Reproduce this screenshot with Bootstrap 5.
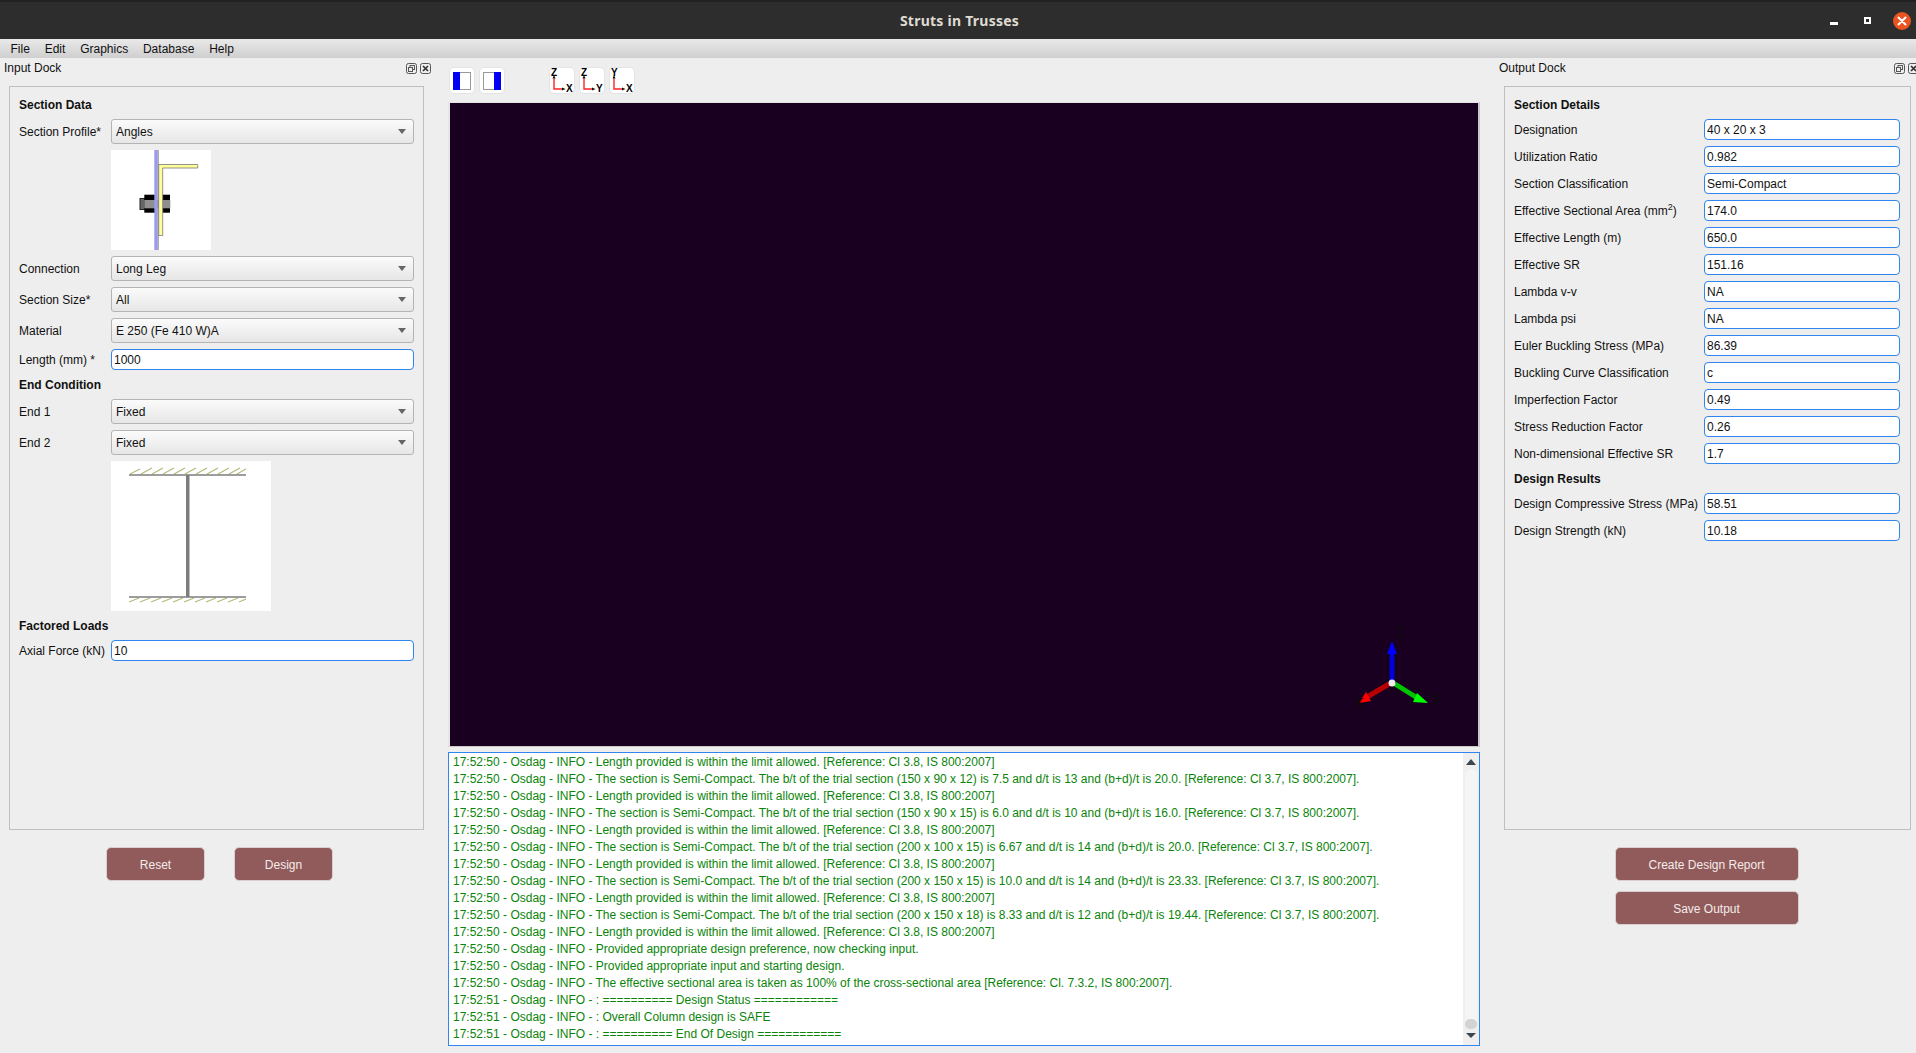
<!DOCTYPE html>
<html lang="en">
<head>
    <meta charset="UTF-8">
    <meta name="viewport" content="width=device-width, initial-scale=1.0">
    <title>Struts in Trusses</title>
    <link href="https://cdn.jsdelivr.net/npm/bootstrap@5.3.3/dist/css/bootstrap.min.css" rel="stylesheet">
    <style>
        html, body { height: 100%; }
        body { background: #eeeeee; color: #111; font: 12px/17px "Liberation Sans", Arial, sans-serif; overflow: hidden; }

        /* barra de titulo */
        .win-title { height: 39px; background: #2d2d2d; border-top: 2px solid #222; padding-left: 3px; color: #dfdbd2; font: bold 14px/38px "Noto Sans", sans-serif; letter-spacing: .25px; }
        .win-btns { right: 0; top: 0; height: 37px; }
        .win-min { margin: 6px 26px 0 0; }
        .win-close { width: 18px; height: 18px; margin: 0 5px 0 22px; }

        /* menu */
        .menu-bar { height: 19px; background: linear-gradient(#e9e9e9, #cfcfcf); padding-left: 10.5px; gap: 14.8px; line-height: 21px; }

        /* docks */
        .dock-left { width: 448px; }
        .dock-right { width: 436px; }
        .dock-head { height: 28px; line-height: 20px; }
        .dock-left .dock-head { padding: 0 17px 0 4px; }
        .dock-right .dock-head { padding: 0 0 0 19px; width: 439px; }
        .dock-ico { gap: 3px; height: 20px; }
        .dock-panel { border: 1px solid #bfbfbf; height: 744px; padding: 10px 9px 0; }
        .dock-left .dock-panel { margin-left: 9px; width: 415px; }
        .dock-right .dock-panel { margin-left: 24px; width: 407px; }
        .sec-title { font-weight: 700; margin: 0 0 5px; line-height: 17px; }
        .sec-title.next { margin-top: 7px; }
        .field-stack { gap: 6px; }
        .field-label { width: 92px; flex: none; white-space: nowrap; padding-top: 2px; }
        .field-label sup { top: -.6em; }
        .dock-right .field-label { width: 190px; }
        .dock-right .form-control { width: 196px; flex: none; }

        .form-select.qt-combo { height: 25px; padding: 2px 0 0 4px; font-size: 12px; line-height: 21px; color: #111; border: 1px solid #b4b4b4; border-radius: 3px;
            background-color: #f4f4f4; background-image: url("data:image/svg+xml,%3csvg xmlns='http://www.w3.org/2000/svg' width='8' height='5'%3e%3cpath fill='%23666' d='M0 0h8L4 5z'/%3e%3c/svg%3e"), linear-gradient(#fbfbfb, #e6e6e6);
            background-repeat: no-repeat; background-position: right 7px center, 0 0; background-size: 8px 5px, auto; box-shadow: none; }
        .form-control.qt-line { height: 21px; min-height: 0; padding: 1px 2px 0; font-size: 12px; line-height: 18px; color: #111; border: 1px solid #3085ee; border-radius: 4px; box-shadow: none; }

        .pic-box { background: #fff; display: block; margin-left: 92px; }

        /* botones */
        .btn.act-btn { background: #925b5b; color: #f3ecec; border: 1px solid #d9cfcf; border-radius: 5px; font-size: 12px; line-height: 17px; height: 34px; padding: 2px 0 0; }
        .left-btns { margin-top: 17px; gap: 29px; width: 439px; }
        .left-btns .act-btn { width: 99px; }
        .right-btns { margin: 17px 0 0 24px; width: 405px; gap: 10px; }
        .right-btns .act-btn { width: 184px; }

        /* centro */
        .center-col { width: 1032px; }
        .tool-strip { height: 44px; padding: 9px 0 0 1px; gap: 4px; }
        .tool-btn { width: 26px; height: 27px; background: #fff; border: 1px solid #e4e4e4; border-radius: 5px; }
        .tool-space { width: 36px; }
        .viewer { height: 645px; background: #190020; border: solid #e6e6e6; border-width: 1px 2px; border-right-color: #c9c9c9; border-bottom-color: #c9c9c9; }
        .axis-gizmo { left: 890px; top: 518px; }
        .log-box { margin-top: 5px; height: 294px; background: #fff; border: 1px solid #3085ee; }
        .log-text { padding: 1px 0 0 4px; color: #0a840a; white-space: nowrap; overflow: hidden; }
        .log-scroll { width: 16px; background: #efefef; padding-top: 6px; }
        .scroll-track { width: 12px; height: 260px; margin: 4px auto 0; background: #f5f5f5; border-radius: 6px; padding-top: 250px; }
        .scroll-thumb { height: 10px; background: #d3d3d3; border-radius: 5px; }
        .tri-up, .tri-down { width: 0; height: 0; margin: 0 auto; border-left: 5px solid transparent; border-right: 5px solid transparent; }
        .tri-up { border-bottom: 6px solid #3a4650; }
        .tri-down { margin-top: 4px; border-top: 5px solid #3a4650; }
    </style>
</head>
<body>

    <!-- Barra de titulo -->
    <div class="win-title position-relative text-center">
        Struts in Trusses
        <div class="win-btns position-absolute d-flex align-items-center">
            <svg width="8" height="3" class="win-min"><rect width="8" height="3" fill="#fff"/></svg>
            <svg width="7" height="7"><rect width="7" height="7" fill="#fff"/><rect x="2" y="2" width="3" height="3" fill="#2d2d2d"/></svg>
            <svg class="win-close" viewBox="0 0 18 18"><circle cx="9" cy="9" r="9" fill="#e95420"/><path d="M5.5 5.5l7 7M12.5 5.5l-7 7" stroke="#fff" stroke-width="2" stroke-linecap="round"/></svg>
        </div>
    </div>

    <!-- Menu -->
    <div class="menu-bar d-flex">
        <span>File</span><span>Edit</span><span>Graphics</span><span>Database</span><span>Help</span>
    </div>

    <div class="d-flex">

        <!-- Input dock -->
        <div class="dock-left flex-shrink-0">
            <div class="dock-head d-flex justify-content-between">
                <span>Input Dock</span>
                <span class="dock-ico d-flex align-items-center">
                    <svg width="11" height="11" viewBox="0 0 11 11" fill="none" stroke="#555"><rect x=".5" y=".5" width="10" height="10" rx="2"/><rect x="4" y="2.5" width="4.5" height="4" /><rect x="2.5" y="4.5" width="4" height="4" fill="#eee"/></svg>
                    <svg width="11" height="11" viewBox="0 0 11 11" fill="none" stroke="#555"><rect x=".5" y=".5" width="10" height="10" rx="2"/><path d="M3 3l5 5M8 3l-5 5" stroke="#333" stroke-width="1.7"/></svg>
                </span>
            </div>
            <div class="dock-panel">
                <div class="sec-title">Section Data</div>
                <div class="d-flex flex-column field-stack">
                    <div class="d-flex align-items-center">
                        <span class="field-label">Section Profile*</span>
                        <select class="form-select qt-combo"><option>Angles</option></select>
                    </div>
                    <svg class="pic-box" width="100" height="100" viewBox="0 0 100 100">
                        <rect x="29" y="48.5" width="5" height="11" fill="#666" stroke="#222"/>
                        <rect x="33.3" y="44.7" width="11" height="18" fill="#000"/>
                        <rect x="51" y="44.7" width="8" height="18" fill="#000"/>
                        <rect x="33.3" y="50" width="26" height="8.3" fill="#8f8f8f"/>
                        <rect x="43.3" y="0" width="3.4" height="100" fill="#9a9af0"/>
                        <rect x="46.7" y="0" width="1" height="100" fill="#8a8a8a"/>
                        <path d="M47.7 14.5h39v3.5h-35v67.5h-4z" fill="#ffff99" stroke="#777" stroke-width=".8"/>
                    </svg>
                    <div class="d-flex align-items-center">
                        <span class="field-label">Connection</span>
                        <select class="form-select qt-combo"><option>Long Leg</option></select>
                    </div>
                    <div class="d-flex align-items-center">
                        <span class="field-label">Section Size*</span>
                        <select class="form-select qt-combo"><option>All</option></select>
                    </div>
                    <div class="d-flex align-items-center">
                        <span class="field-label">Material</span>
                        <select class="form-select qt-combo"><option>E 250 (Fe 410 W)A</option></select>
                    </div>
                    <div class="d-flex align-items-center">
                        <span class="field-label">Length (mm) *</span>
                        <input class="form-control qt-line" value="1000">
                    </div>
                </div>
                <div class="sec-title next">End Condition</div>
                <div class="d-flex flex-column field-stack">
                    <div class="d-flex align-items-center">
                        <span class="field-label">End 1</span>
                        <select class="form-select qt-combo"><option>Fixed</option></select>
                    </div>
                    <div class="d-flex align-items-center">
                        <span class="field-label">End 2</span>
                        <select class="form-select qt-combo"><option>Fixed</option></select>
                    </div>
                    <svg class="pic-box" width="160" height="150" viewBox="0 0 160 150">
                        <path stroke="#b3b97a" stroke-width="1.2" d="M19 13l10-5M30 13l11-6M41 13l11-6M52 13l11-6M63 13l11-6M74 13l11-6M85 13l11-6M96 13l11-6M107 13l11-6M118 13l11-6M126 13l9-5M18 141l10-4M29 141l10-4M40 141l10-4M51 141l10-4M62 141l10-4M73 141l10-4M84 141l10-4M95 141l10-4M106 141l10-4M117 141l10-4M128 141l7-3"/>
                        <path stroke="#7d7d7d" stroke-width="1.5" d="M18 14h117M18 136h117"/>
                        <rect x="75" y="14" width="3.5" height="122" fill="#7d7d7d"/>
                    </svg>
                </div>
                <div class="sec-title next">Factored Loads</div>
                <div class="d-flex align-items-center">
                    <span class="field-label">Axial Force (kN)</span>
                    <input class="form-control qt-line" value="10">
                </div>
            </div>
            <div class="left-btns d-flex justify-content-center">
                <button class="btn act-btn">Reset</button>
                <button class="btn act-btn">Design</button>
            </div>
        </div>

        <!-- Centro: visor y log -->
        <div class="center-col flex-shrink-0">
            <div class="tool-strip d-flex">
                <div class="tool-btn d-flex align-items-center justify-content-center">
                    <svg width="18" height="18"><rect x=".5" y=".5" width="17" height="17" fill="#fff" stroke="#999"/><rect width="7" height="18" fill="#0000f5"/></svg>
                </div>
                <div class="tool-btn d-flex align-items-center justify-content-center">
                    <svg width="18" height="18"><rect x=".5" y=".5" width="17" height="17" fill="#fff" stroke="#999"/><rect x="11" width="7" height="18" fill="#0000f5"/></svg>
                </div>
                <div class="tool-space"></div>
                <div class="tool-btn">
                    <svg class="d-block" width="24" height="25" viewBox="0 0 24 25" font-family="Liberation Sans" font-weight="700" font-size="10"><path d="M4 10.5V21h8" fill="none" stroke="#f22" stroke-width="1.4"/><path d="M4 7L2.5 10.5h3zM15.5 21L12 19.5v3z" fill="#111"/><text x="1" y="8">Z</text><text x="16" y="24">X</text></svg>
                </div>
                <div class="tool-btn">
                    <svg class="d-block" width="24" height="25" viewBox="0 0 24 25" font-family="Liberation Sans" font-weight="700" font-size="10"><path d="M4 10.5V21h8" fill="none" stroke="#f22" stroke-width="1.4"/><path d="M4 7L2.5 10.5h3zM15.5 21L12 19.5v3z" fill="#111"/><text x="1" y="8">Z</text><text x="16" y="24">Y</text></svg>
                </div>
                <div class="tool-btn">
                    <svg class="d-block" width="24" height="25" viewBox="0 0 24 25" font-family="Liberation Sans" font-weight="700" font-size="10"><path d="M4 10.5V21h8" fill="none" stroke="#f22" stroke-width="1.4"/><path d="M4 7L2.5 10.5h3zM15.5 21L12 19.5v3z" fill="#111"/><text x="1" y="8">Y</text><text x="16" y="24">X</text></svg>
                </div>
            </div>

            <div class="viewer position-relative">
                <!-- ejes -->
                <svg class="axis-gizmo position-absolute" width="110" height="110" viewBox="0 0 110 110" font-family="Liberation Serif" font-size="14" fill="#0a0a0a">
                    <path d="M52 60V30" stroke="#0000d8" stroke-width="5"/>
                    <path d="M52 20l-5 13h10z" fill="#0000ff"/>
                    <path d="M49 63L27 76" stroke="#b80000" stroke-width="5"/>
                    <path d="M19 82l12-2-5-9z" fill="#ff0000"/>
                    <path d="M55 63l24 15" stroke="#00c400" stroke-width="5"/>
                    <path d="M88 82l-11-10-4 9z" fill="#00ff00"/>
                    <circle cx="52" cy="62" r="3.5" fill="#eee"/>
                    <text x="56" y="16">Z</text>
                    <text x="92" y="83">Y</text>
                    <text x="14" y="87">X</text>
                </svg>
            </div>

            <div class="log-box d-flex">
                <div class="log-text flex-grow-1">
                    <div>17:52:50 - Osdag - INFO - Length provided is within the limit allowed. [Reference: Cl 3.8, IS 800:2007]</div>
                    <div>17:52:50 - Osdag - INFO - The section is Semi-Compact. The b/t of the trial section (150 x 90 x 12) is 7.5 and d/t is 13 and (b+d)/t is 20.0. [Reference: Cl 3.7, IS 800:2007].</div>
                    <div>17:52:50 - Osdag - INFO - Length provided is within the limit allowed. [Reference: Cl 3.8, IS 800:2007]</div>
                    <div>17:52:50 - Osdag - INFO - The section is Semi-Compact. The b/t of the trial section (150 x 90 x 15) is 6.0 and d/t is 10 and (b+d)/t is 16.0. [Reference: Cl 3.7, IS 800:2007].</div>
                    <div>17:52:50 - Osdag - INFO - Length provided is within the limit allowed. [Reference: Cl 3.8, IS 800:2007]</div>
                    <div>17:52:50 - Osdag - INFO - The section is Semi-Compact. The b/t of the trial section (200 x 100 x 15) is 6.67 and d/t is 14 and (b+d)/t is 20.0. [Reference: Cl 3.7, IS 800:2007].</div>
                    <div>17:52:50 - Osdag - INFO - Length provided is within the limit allowed. [Reference: Cl 3.8, IS 800:2007]</div>
                    <div>17:52:50 - Osdag - INFO - The section is Semi-Compact. The b/t of the trial section (200 x 150 x 15) is 10.0 and d/t is 14 and (b+d)/t is 23.33. [Reference: Cl 3.7, IS 800:2007].</div>
                    <div>17:52:50 - Osdag - INFO - Length provided is within the limit allowed. [Reference: Cl 3.8, IS 800:2007]</div>
                    <div>17:52:50 - Osdag - INFO - The section is Semi-Compact. The b/t of the trial section (200 x 150 x 18) is 8.33 and d/t is 12 and (b+d)/t is 19.44. [Reference: Cl 3.7, IS 800:2007].</div>
                    <div>17:52:50 - Osdag - INFO - Length provided is within the limit allowed. [Reference: Cl 3.8, IS 800:2007]</div>
                    <div>17:52:50 - Osdag - INFO - Provided appropriate design preference, now checking input.</div>
                    <div>17:52:50 - Osdag - INFO - Provided appropriate input and starting design.</div>
                    <div>17:52:50 - Osdag - INFO - The effective sectional area is taken as 100% of the cross-sectional area [Reference: Cl. 7.3.2, IS 800:2007].</div>
                    <div>17:52:51 - Osdag - INFO - : ========== Design Status ============</div>
                    <div>17:52:51 - Osdag - INFO - : Overall Column design is SAFE</div>
                    <div>17:52:51 - Osdag - INFO - : ========== End Of Design ============</div>
                </div>
                <div class="log-scroll flex-shrink-0">
                    <div class="tri-up"></div>
                    <div class="scroll-track"><div class="scroll-thumb"></div></div>
                    <div class="tri-down"></div>
                </div>
            </div>
        </div>

        <!-- Output dock -->
        <div class="dock-right flex-shrink-0">
            <div class="dock-head d-flex justify-content-between">
                <span>Output Dock</span>
                <span class="dock-ico d-flex align-items-center">
                    <svg width="11" height="11" viewBox="0 0 11 11" fill="none" stroke="#555"><rect x=".5" y=".5" width="10" height="10" rx="2"/><rect x="4" y="2.5" width="4.5" height="4" /><rect x="2.5" y="4.5" width="4" height="4" fill="#eee"/></svg>
                    <svg width="11" height="11" viewBox="0 0 11 11" fill="none" stroke="#555"><rect x=".5" y=".5" width="10" height="10" rx="2"/><path d="M3 3l5 5M8 3l-5 5" stroke="#333" stroke-width="1.7"/></svg>
                </span>
            </div>
            <div class="dock-panel">
                <div class="sec-title">Section Details</div>
                <div class="d-flex flex-column field-stack">
                    <div class="d-flex align-items-center"><span class="field-label">Designation</span><input class="form-control qt-line" value="40 x 20 x 3"></div>
                    <div class="d-flex align-items-center"><span class="field-label">Utilization Ratio</span><input class="form-control qt-line" value="0.982"></div>
                    <div class="d-flex align-items-center"><span class="field-label">Section Classification</span><input class="form-control qt-line" value="Semi-Compact"></div>
                    <div class="d-flex align-items-center"><span class="field-label">Effective Sectional Area (mm<sup>2</sup>)</span><input class="form-control qt-line" value="174.0"></div>
                    <div class="d-flex align-items-center"><span class="field-label">Effective Length (m)</span><input class="form-control qt-line" value="650.0"></div>
                    <div class="d-flex align-items-center"><span class="field-label">Effective SR</span><input class="form-control qt-line" value="151.16"></div>
                    <div class="d-flex align-items-center"><span class="field-label">Lambda v-v</span><input class="form-control qt-line" value="NA"></div>
                    <div class="d-flex align-items-center"><span class="field-label">Lambda psi</span><input class="form-control qt-line" value="NA"></div>
                    <div class="d-flex align-items-center"><span class="field-label">Euler Buckling Stress (MPa)</span><input class="form-control qt-line" value="86.39"></div>
                    <div class="d-flex align-items-center"><span class="field-label">Buckling Curve Classification</span><input class="form-control qt-line" value="c"></div>
                    <div class="d-flex align-items-center"><span class="field-label">Imperfection Factor</span><input class="form-control qt-line" value="0.49"></div>
                    <div class="d-flex align-items-center"><span class="field-label">Stress Reduction Factor</span><input class="form-control qt-line" value="0.26"></div>
                    <div class="d-flex align-items-center"><span class="field-label">Non-dimensional Effective SR</span><input class="form-control qt-line" value="1.7"></div>
                </div>
                <div class="sec-title next">Design Results</div>
                <div class="d-flex flex-column field-stack">
                    <div class="d-flex align-items-center"><span class="field-label">Design Compressive Stress (MPa)</span><input class="form-control qt-line" value="58.51"></div>
                    <div class="d-flex align-items-center"><span class="field-label">Design Strength (kN)</span><input class="form-control qt-line" value="10.18"></div>
                </div>
            </div>
            <div class="right-btns d-flex flex-column align-items-center">
                <button class="btn act-btn">Create Design Report</button>
                <button class="btn act-btn">Save Output</button>
            </div>
        </div>
    </div>

    <script src="https://cdn.jsdelivr.net/npm/bootstrap@5.3.3/dist/js/bootstrap.bundle.min.js"></script>
</body>
</html>
